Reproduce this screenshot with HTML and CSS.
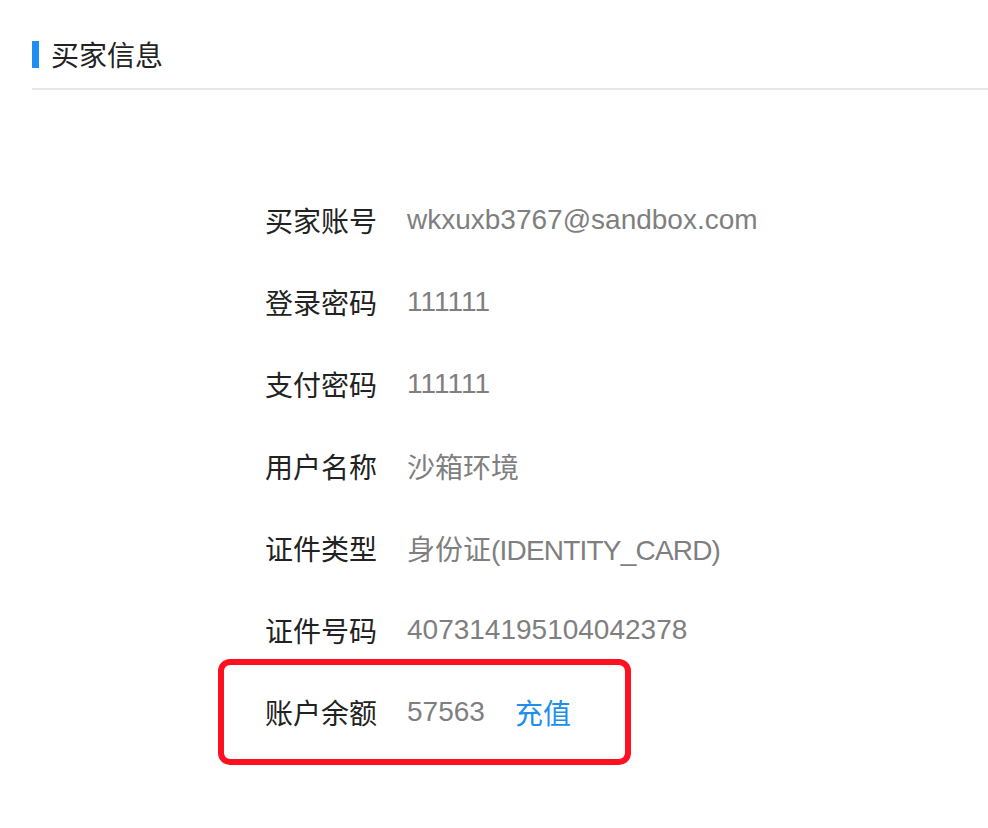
FILE: index.html
```html
<!DOCTYPE html>
<html lang="zh-CN">
<head>
<meta charset="utf-8">
<title>买家信息</title>
<link rel="stylesheet" href="styles.css">
</head>
<body>
<div class="header">
  <h2 class="title"><span class="bar"></span>买家信息</h2>
</div>
<div class="list">
  <div class="row"><span class="label">买家账号</span><span class="value">wkxuxb3767@sandbox.com</span></div>
  <div class="row"><span class="label">登录密码</span><span class="value">111111</span></div>
  <div class="row"><span class="label">支付密码</span><span class="value">111111</span></div>
  <div class="row"><span class="label">用户名称</span><span class="value">沙箱环境</span></div>
  <div class="row"><span class="label">证件类型</span><span class="value">身份证<span class="latin">(IDENTITY_CARD)</span></span></div>
  <div class="row"><span class="label">证件号码</span><span class="value">407314195104042378</span></div>
  <div class="row highlight"><span class="label">账户余额</span><span class="value">57563</span><a class="link" href="#">充值</a></div>
</div>
</body>
</html>
```
FILE: styles.css
```css
html, body {
  margin: 0;
  padding: 0;
  background: #ffffff;
}
body {
  min-height: 828px;
  font-family: "Liberation Sans", "Noto Sans CJK SC", sans-serif;
  color: #222222;
}
.header {
  margin-left: 32px;
  padding-top: 32px;
  padding-bottom: 12px;
  border-bottom: 2px solid #e6e6e6;
}
.title {
  margin: 0;
  height: 44px;
  display: flex;
  align-items: center;
  font-size: 28px;
  font-weight: normal;
  color: #222222;
}
.bar {
  width: 7px;
  height: 27px;
  background: #1e8ff0;
  margin-right: 12px;
}
.list {
  margin-top: 89px;
  margin-left: 218px;
  padding-bottom: 40px;
}
.row {
  display: flex;
  align-items: center;
  height: 82px;
  padding-left: 47px;
  font-size: 28px;
  white-space: nowrap;
}
.label {
  flex: none;
  width: 142px;
  color: #222222;
}
.value {
  color: #7f7f7f;
}
.latin {
  letter-spacing: -0.8px;
}
.link {
  margin-left: 30px;
  color: #1f8dec;
  text-decoration: none;
}
.highlight {
  box-sizing: border-box;
  width: 413px;
  height: 106px;
  margin-top: -12px;
  padding-left: 41px;
  border: 6px solid #ff1020;
  border-radius: 12px;
}
```
